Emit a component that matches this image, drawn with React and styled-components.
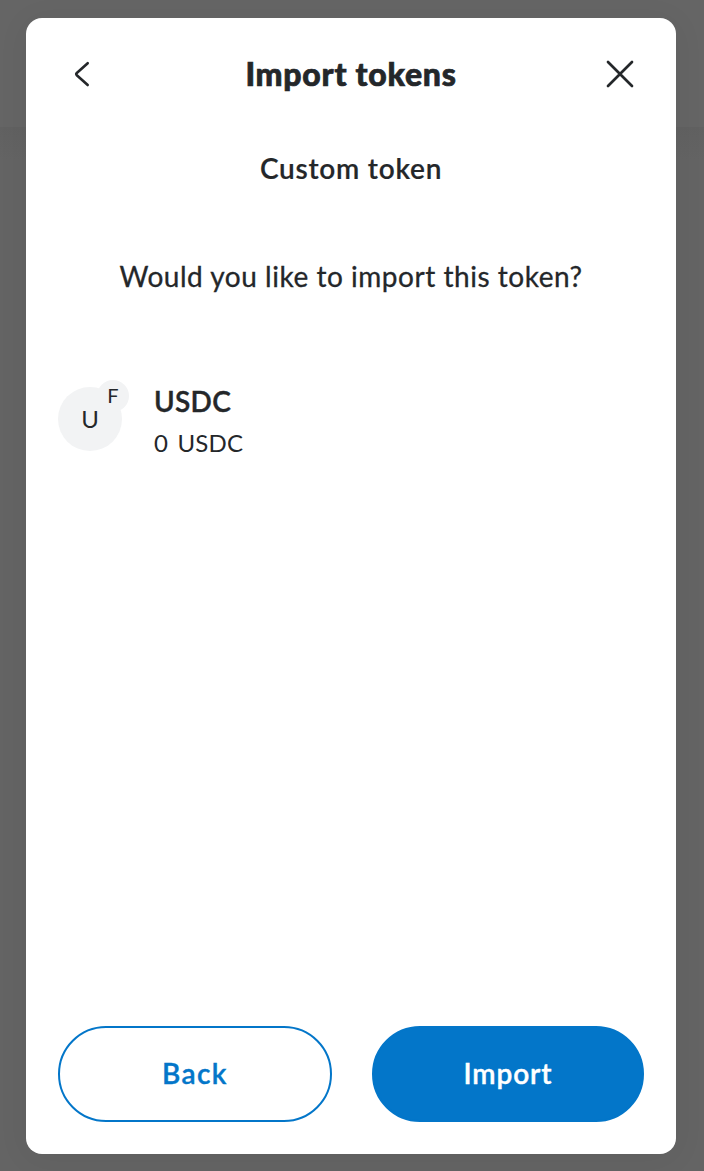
import React from 'react';
import styled, { createGlobalStyle } from 'styled-components';

const GlobalStyle = createGlobalStyle`
  * { box-sizing: border-box; }
  body { margin: 0; background: #646464; }
`;

const Backdrop = styled.div`
  height: 1171px;
  padding: 18px 28px 17px 26px;
  overflow: hidden;
  background: linear-gradient(#656565 0 127px, #616161 127px, #646464 160px);
  font-family: Lato, 'Open Sans', sans-serif;
  color: #24272a;
`;

const Dialog = styled.section`
  display: flex;
  flex-direction: column;
  height: 1136px;
  padding: 32px;
  border-radius: 16px;
  background: #fff;
  box-shadow: 0 4px 32px rgba(0, 0, 0, 0.06);
`;

const Header = styled.header`
  display: flex;
  align-items: center;
  justify-content: space-between;
  height: 48px;
`;

const IconButton = styled.button`
  display: flex;
  width: 48px;
  height: 48px;
  padding: 0;
  border: 0;
  background: none;
  color: inherit;
`;

const Text = styled.div`
  font-size: ${(p) => p.$size}px;
  font-weight: ${(p) => p.$weight || 400};
  line-height: ${(p) => p.$line}px;
  letter-spacing: ${(p) => p.$track || 0}px;
  word-spacing: ${(p) => p.$wordGap || 0}px;
  -webkit-text-stroke: ${(p) => p.$stroke || 0}px currentColor;
  white-space: nowrap;
`;

const Title = styled(Text).attrs({ as: 'h1' })`
  margin: 0;
`;

const Subtitle = styled(Text).attrs({ as: 'h2' })`
  margin: 50px 0 0;
  text-align: center;
`;

const Question = styled(Text).attrs({ as: 'p' })`
  margin: 68px 0 0;
  text-align: center;
`;

const TokenRow = styled.div`
  display: flex;
  gap: 32px;
  margin-top: 85px;
`;

const Avatar = styled.div`
  position: relative;
  display: flex;
  align-items: center;
  justify-content: center;
  width: 64px;
  height: 64px;
  margin-top: 6px;
  border-radius: 50%;
  background: #f2f3f4;
`;

const NetworkBadge = styled.div`
  position: absolute;
  top: -7px;
  right: -7px;
  display: flex;
  align-items: center;
  justify-content: center;
  width: 32px;
  height: 32px;
  padding-bottom: 2px;
  border-radius: 50%;
  background: #f2f3f4;
`;

const Actions = styled.footer`
  display: grid;
  grid-template-columns: 274px 272px;
  gap: 40px;
  margin-top: auto;
`;

const PillButton = styled.button`
  display: flex;
  align-items: center;
  justify-content: center;
  height: 96px;
  padding: 0 0 2px;
  border: 2px solid #0376c9;
  border-radius: 48px;
  background: ${(p) => (p.$primary ? '#0376c9' : '#fff')};
  color: ${(p) => (p.$primary ? '#fff' : '#0376c9')};
  font-family: inherit;
`;

export default function App() {
  return (
    <>
      <GlobalStyle />
      <Backdrop>
        <Dialog>
          <Header>
            <IconButton aria-label="Back">
              <svg width="48" height="48" fill="none" stroke="currentColor" strokeWidth="2.6" strokeLinecap="round" strokeLinejoin="round">
                <path d="M29.7 13.2 18.8 23q-1.2 1.1 0 2.2l10.9 9.8" />
              </svg>
            </IconButton>
            <Title $size={32} $weight={900} $line={48} $track={0.75} $stroke={0.7}>Import tokens</Title>
            <IconButton aria-label="Close">
              <svg width="48" height="48" fill="none" stroke="currentColor" strokeWidth="2.7" strokeLinecap="round">
                <path d="m12 12 24 24m0-24L12 36" />
              </svg>
            </IconButton>
          </Header>
          <Subtitle $size={28} $weight={600} $line={40} $track={0.75} $stroke={0.2}>Custom token</Subtitle>
          <Question $size={28} $weight={400} $line={40} $track={0.53} $stroke={0.3}>Would you like to import this token?</Question>
          <TokenRow>
            <Avatar>
              <Text $size={24} $line={40}>U</Text>
              <NetworkBadge>
                <Text $size={20} $line={30}>F</Text>
              </NetworkBadge>
            </Avatar>
            <div>
              <Text $size={28} $weight={600} $line={40} $track={0.3} $stroke={0.4}>USDC</Text>
              <Text $size={24} $line={44} $wordGap={3} $track={0.2}>0 USDC</Text>
            </div>
          </TokenRow>
          <Actions>
            <PillButton><Text $size={28} $weight={600} $line={44} $track={1.4} $stroke={0.4}>Back</Text></PillButton>
            <PillButton $primary><Text $size={28} $weight={600} $line={44} $track={0.9} $stroke={0.4}>Import</Text></PillButton>
          </Actions>
        </Dialog>
      </Backdrop>
    </>
  );
}
